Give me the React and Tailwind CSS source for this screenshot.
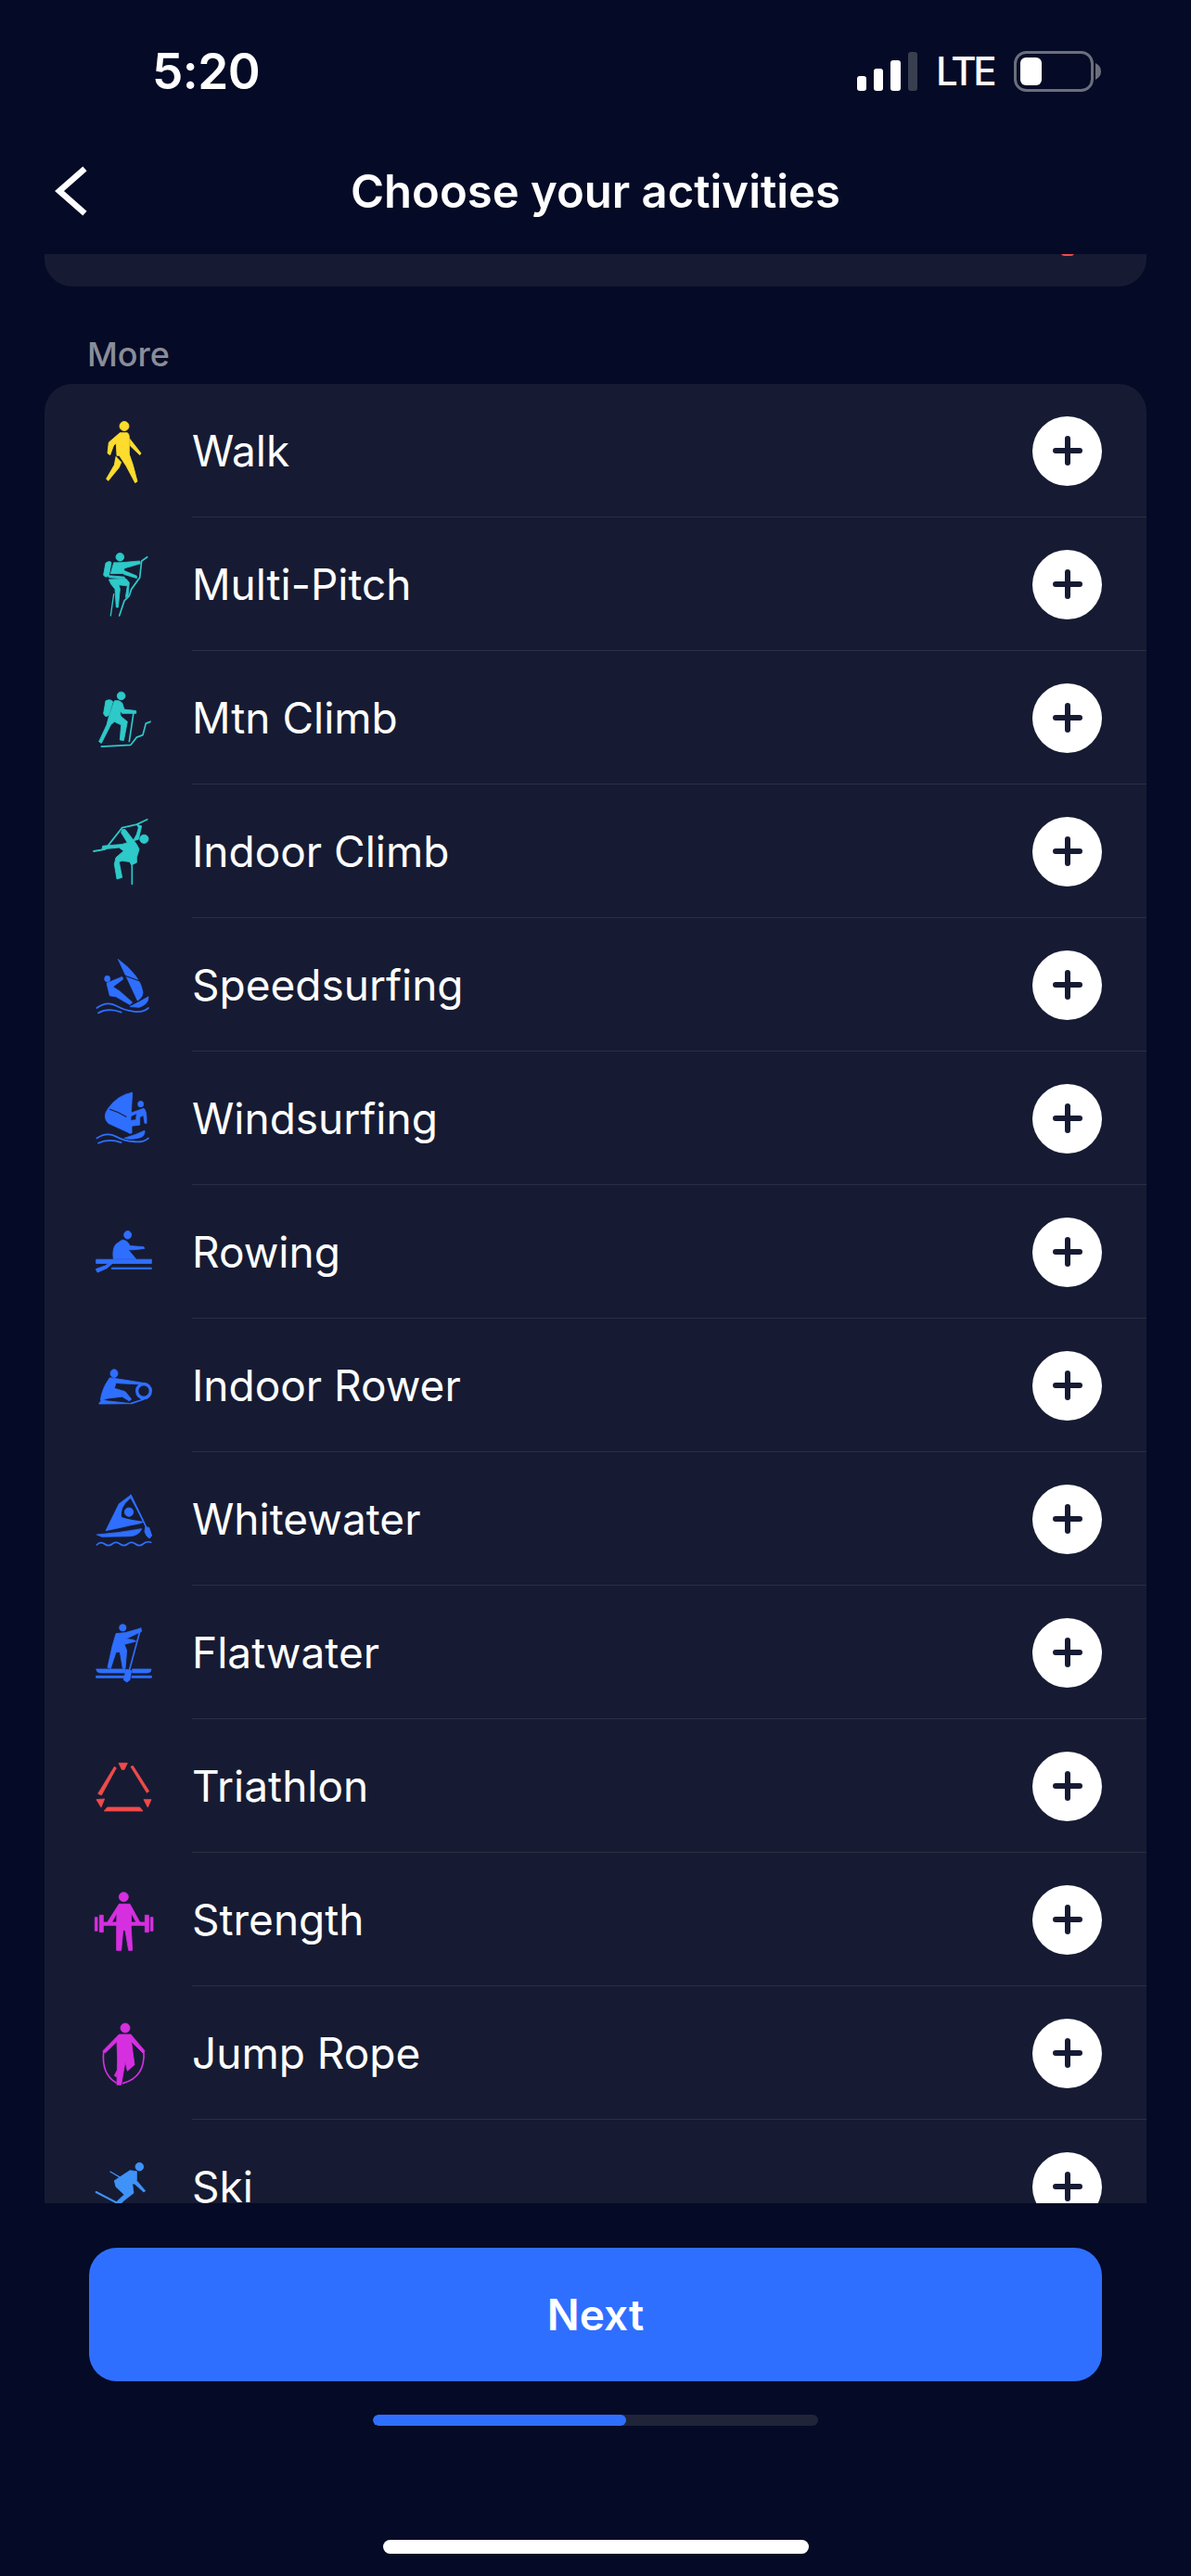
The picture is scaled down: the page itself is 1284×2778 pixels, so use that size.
import React from "react";

const YEL = "#fddc2e", TEAL = "#2ec9c9", BLUE = "#2f6fff", RED = "#f04a4a", PINK = "#d62fe0", SKY = "#3f93f8", BG = "#161b33";

function Icon({ cy, s = 2.8, color, children }) {
  return (
    <svg viewBox={`99 ${cy - 40 * s} 240 ${80 * s}`} preserveAspectRatio="none" className="w-20 h-20 shrink-0 overflow-visible" fill={color} stroke={color} strokeWidth="2.5" strokeLinejoin="round">
      {children}
    </svg>
  );
}

const Line = ({ d, c, w = 5 }) => <path d={d} fill="none" stroke={c} strokeWidth={w} strokeLinecap="round" strokeLinejoin="round" />;

const icons = {
  Walk: (
    <Icon cy={157} color={YEL}>
      <ellipse cx="222" cy="83" rx="15" ry="14" />
      <path d="M208 103L232 103Q238 106 238 118L238 168L250 200L264 250L257 254L228 203L206 172L198 172L196 135L188 140L176 170L168 165L172 132Z" />
      <path d="M195 175L212 192L205 208L170 248L164 242L190 200Z" />
      <path d="M240 122L276 165L272 170L241 142Z" />
    </Icon>
  ),
  MultiPitch: (
    <Icon cy={560} color={TEAL}>
      <ellipse cx="208" cy="478" rx="13" ry="12" />
      <path d="M162 496Q172 488 180 494L172 535Q160 542 155 532Z" />
      <path d="M188 495L210 495L272 490L274 498L222 512L218 528L178 528Z" />
      <path d="M218 518L262 535L262 542L220 530Z" />
      <path d="M172 534L222 538L224 543L172 540Z" />
      <path d="M172 546Q178 562 192 575L196 630L202 630L208 575L204 562L232 565L226 600L234 596L238 555L228 544Z" />
      <Line c={TEAL} d="M296 478L278 490L272 540L245 575L238 595L222 610L206 655" />
      <Line c={TEAL} w={4} d="M188 590L178 655" />
    </Icon>
  ),
  MtnClimb: (
    <Icon cy={963} color={TEAL}>
      <ellipse cx="212" cy="897" rx="13" ry="12" />
      <path d="M162 912Q178 905 185 915L172 955Q160 965 155 950Z" />
      <path d="M190 912Q205 908 215 918L222 938L260 942L260 950L215 950L208 940L210 958L232 975L220 1032L208 1030L212 985L190 975L178 985L148 1040L140 1035L165 985L172 960Z" />
      <Line c={TEAL} d="M252 948L238 1035" />
      <Line c={TEAL} d="M148 1050L243 1045L262 1022L282 1015L292 980L306 975" />
    </Icon>
  ),
  IndoorClimb: (
    <Icon cy={1366} color={TEAL}>
      <ellipse cx="286" cy="1329" rx="14" ry="13" />
      <Line c={TEAL} d="M296 1270L262 1285L215 1295L160 1360L123 1366" />
      <path d="M215 1300L225 1300L262 1345L270 1360L262 1385L262 1400L245 1408L240 1398L215 1395L205 1398L215 1445L198 1450L190 1405L195 1385L220 1365L205 1355L150 1360L152 1350L215 1345L232 1340L212 1310Z" />
      <path d="M262 1285L278 1290L268 1330L250 1335L262 1315L268 1295Z" />
      <Line c={TEAL} d="M247 1410L247 1465" />
    </Icon>
  ),
  Speedsurfing: (
    <Icon cy={202} color={BLUE}>
      <path d="M202 125Q275 175 282 225Q282 240 265 250Z" />
      <Line c={BG} w={3} d="M215 172Q240 180 270 190" />
      <ellipse cx="167" cy="184" rx="9" ry="9" />
      <path d="M165 197L215 178L218 185L185 208L208 222L248 255L240 262L195 238L175 235Z" />
      <path d="M240 268Q270 255 300 238Q300 262 270 270Z" />
      <Line c={BLUE} d="M133 272Q165 250 195 265T250 282Q280 288 300 272" />
      <Line c={BLUE} d="M138 287Q170 270 212 285" />
    </Icon>
  ),
  Windsurfing: (
    <Icon cy={605} color={BLUE}>
      <path d="M248 527L240 650L170 620Q150 600 170 575Q200 535 248 527Z" />
      <Line c={BG} w={3} d="M175 578Q200 585 228 600" />
      <ellipse cx="275" cy="562" rx="9" ry="9" />
      <path d="M240 590L285 575Q295 580 294 620L288 620L284 595L272 602L272 625L246 628L246 650L237 650L238 612L260 610L262 590L240 600Z" />
      <path d="M222 665Q260 655 288 642Q290 662 265 665Q240 670 222 665Z" />
      <Line c={BLUE} d="M133 665Q165 645 195 660T250 675Q280 680 300 665" />
      <Line c={BLUE} d="M138 680Q170 665 212 678" />
    </Icon>
  ),
  Rowing: (
    <Icon cy={1008} color={BLUE}>
      <ellipse cx="233" cy="957" rx="12" ry="12" />
      <path d="M215 972Q232 972 240 990L285 993L287 998L250 1002L235 1002L260 1030L187 1030Q182 1000 195 985Z" />
      <rect x="131" y="1031" width="179" height="12" />
      <rect x="181" y="1056" width="129" height="4" />
      <path d="M190 1038L165 1058L135 1070L130 1060L160 1050L185 1035Z" />
    </Icon>
  ),
  IndoorRower: (
    <Icon cy={1411} color={BLUE}>
      <ellipse cx="189" cy="1375" rx="12" ry="12" />
      <path d="M175 1388L205 1392L280 1403L280 1408L210 1405L195 1403L190 1420L225 1430L245 1453L238 1458L215 1445L170 1450L145 1455Q150 1420 175 1388Z" />
      <path d="M140 1467L150 1452L165 1458L245 1466Z" />
      <ellipse cx="285" cy="1428" rx="22" ry="21" fill="none" stroke={BLUE} strokeWidth="10" />
      <Line c={BLUE} d="M245 1465L285 1453" />
    </Icon>
  ),
  Whitewater: (
    <Icon cy={264} s={3} color={BLUE}>
      <path d="M243 187L245 195L285 272L275 278L240 285L210 292L162 302L205 215Z" />
      <path fill={BG} stroke="none" d="M242 197Q208 225 213 258Q240 268 283 272Z" />
      <ellipse cx="237" cy="242" rx="14" ry="14" />
      <Line c={BLUE} d="M243 187L295 295" />
      <path d="M290 290L302 292L311 318L303 327Q292 320 288 305Z" />
      <path d="M133 315Q200 310 278 296Q270 318 240 320L150 322Z" />
      <Line c={BLUE} d="M133 348Q145 335 158 345T183 345T208 345T233 345T258 345T283 345T308 340" />
    </Icon>
  ),
  Flatwater: (
    <Icon cy={696} s={3} color={BLUE}>
      <ellipse cx="217" cy="616" rx="11" ry="11" />
      <path d="M195 635L225 632L275 618L278 628L232 650L222 652L250 655L260 660L222 670L230 690L225 748L217 748L208 695L195 695L178 748L168 745L180 690L182 680Z" />
      <Line c={BLUE} d="M275 618L238 755" />
      <path d="M228 750L245 755L240 785L230 792L220 785Z" />
      <path d="M131 750H225V762H145Q133 762 131 750Z" />
      <path d="M248 750H309Q309 762 297 762H248Z" />
      <rect x="131" y="772" width="93" height="6" />
      <rect x="246" y="772" width="64" height="6" />
    </Icon>
  ),
  Triathlon: (
    <Icon cy={1128} s={3} color={RED}>
      <path d="M190 1066L196 1070L148 1158L137 1153Z" />
      <path d="M243 1066L250 1063L302 1145L295 1150Z" />
      <path d="M167 1197L272 1197L282 1209L157 1209Z" />
      <path d="M204 1054H232L222 1075H214Z" />
      <path d="M132 1172L158 1170L147 1197Z" />
      <path d="M285 1172H309L298 1197Z" />
    </Icon>
  ),
  Strength: (
    <Icon cy={540} s={3} color={PINK}>
      <ellipse cx="220" cy="467" rx="15" ry="15" />
      <path d="M205 490H240L272 548L262 552L245 520L244 565L248 640L236 640L225 575H218L212 640H197L197 565L198 520L180 552L168 548Z" />
      <rect x="154" y="549" width="135" height="10" />
      <rect x="142" y="526" width="12" height="55" />
      <rect x="127" y="533" width="8" height="44" />
      <rect x="289" y="526" width="12" height="55" />
      <rect x="307" y="533" width="8" height="44" />
    </Icon>
  ),
  JumpRope: (
    <Icon cy={972} s={3} color={PINK}>
      <ellipse cx="225" cy="891" rx="15" ry="15" />
      <path d="M205 912H243L288 965L282 972L245 935L250 975L255 1010L232 1030L225 1000L212 1075L198 1075L200 990L198 935L160 972L153 965Z" />
      <Line c={PINK} d="M155 968Q148 1040 195 1068" />
      <Line c={PINK} d="M285 968Q290 1050 218 1070" />
      <path d="M190 1045L198 1030L197 1050Z" />
    </Icon>
  ),
  Ski: (
    <Icon cy={1404} s={3} color={SKY}>
      <ellipse cx="271" cy="1340" rx="13" ry="13" />
      <path d="M240 1352L262 1355L262 1385L290 1418L285 1422L255 1395L248 1395L252 1425L220 1450L200 1470L190 1460L222 1430L195 1405L190 1385Z" />
      <Line c={SKY} w={4} d="M177 1356L215 1378" />
      <Line c={SKY} w={6} d="M131 1422L200 1458" />
    </Icon>
  ),
};

const rows = [
  ["Walk", icons.Walk],
  ["Multi-Pitch", icons.MultiPitch],
  ["Mtn Climb", icons.MtnClimb],
  ["Indoor Climb", icons.IndoorClimb],
  ["Speedsurfing", icons.Speedsurfing],
  ["Windsurfing", icons.Windsurfing],
  ["Rowing", icons.Rowing],
  ["Indoor Rower", icons.IndoorRower],
  ["Whitewater", icons.Whitewater],
  ["Flatwater", icons.Flatwater],
  ["Triathlon", icons.Triathlon],
  ["Strength", icons.Strength],
  ["Jump Rope", icons.JumpRope],
  ["Ski", icons.Ski],
];

function Plus() {
  return (
    <div className="w-[75px] h-[75px] rounded-full bg-white flex items-center justify-center shrink-0">
      <svg width="32" height="32" viewBox="0 0 32 32">
        <path d="M16 3V29M3 16H29" stroke={BG} strokeWidth="6" strokeLinecap="round" fill="none" />
      </svg>
    </div>
  );
}

function Row({ label, icon }) {
  return (
    <div className="h-36 flex items-center pl-[45px]">
      {icon}
      <div className="ml-[34px] flex-1 h-full flex items-center justify-between border-b-[1.5px] border-[#2a2f45] pr-12 pt-[1px]">
        <span className="text-[46px] font-normal text-white leading-none">{label}</span>
        <Plus />
      </div>
    </div>
  );
}

export default function App() {
  return (
    <div className="w-[1284px] h-[2778px] bg-[#050a26] flex flex-col overflow-hidden text-white font-['Inter',sans-serif]">
      <div className="h-[154px] shrink-0 flex items-center pl-[164px] pr-[97px] justify-between">
        <span className="text-[53px] font-semibold leading-none tracking-[-0.5px]">5:20</span>
        <div className="flex items-center">
          <svg width="66" height="42" viewBox="0 0 66 42">
            <rect x="0" y="26" width="10" height="16" rx="3" fill="#fff" />
            <rect x="18" y="18" width="10" height="24" rx="3" fill="#fff" />
            <rect x="36" y="9" width="11" height="33" rx="3" fill="#fff" />
            <rect x="55" y="0" width="10" height="42" rx="3" fill="#3a3f50" />
          </svg>
          <span className="ml-[19px] text-[42px] font-medium leading-none tracking-[-3.5px]">LTE</span>
          <svg className="ml-[22px]" width="94" height="44" viewBox="0 0 94 44">
            <rect x="1.5" y="1.5" width="83" height="41" rx="12" fill="none" stroke="#6b6f7d" strokeWidth="3" />
            <rect x="7" y="7" width="23" height="30" rx="6" fill="#fff" />
            <path d="M88 13Q94 16 94 22Q94 28 88 31Z" fill="#6b6f7d" />
          </svg>
        </div>
      </div>

      <div className="h-[120px] shrink-0 grid grid-cols-[1fr_auto_1fr] items-center pb-4 pl-[57px]">
        <svg width="38" height="56" viewBox="0 0 38 56">
          <path d="M32 6L7 28L32 50" fill="none" stroke="#fff" strokeWidth="6.5" strokeLinecap="square" />
        </svg>
        <h1 className="text-[49px] font-semibold leading-none -ml-[57px]">Choose your activities</h1>
        <div />
      </div>

      <div className="flex-1 min-h-0 overflow-hidden px-12">
        <div className="h-[35px] bg-[#161b33] rounded-b-[30px] relative">
          <div className="absolute right-[78px] -top-[5px] w-[14px] h-[7px] rounded-full bg-[#f04a4a]" />
        </div>
        <div className="h-[105px] flex items-center pl-[46px] pt-[40px] text-[36px] font-medium text-[#8a8d99] leading-none">More</div>
        <div className="bg-[#161b33] rounded-t-[30px]">
          {rows.map(([label, icon]) => (
            <Row key={label} label={label} icon={icon} />
          ))}
        </div>
      </div>

      <div className="h-[402px] shrink-0 flex flex-col items-center">
        <button className="mt-12 w-[1092px] h-36 rounded-[30px] bg-[#2f6fff] text-white text-[46px] font-semibold leading-none">Next</button>
        <div className="mt-9 w-[480px] h-3 rounded-full bg-[#1f2438] overflow-hidden">
          <div className="w-[273px] h-full rounded-full bg-[#2f6fff]" />
        </div>
        <div className="mt-[123px] w-[459px] h-[15px] rounded-full bg-white" />
      </div>
    </div>
  );
}
